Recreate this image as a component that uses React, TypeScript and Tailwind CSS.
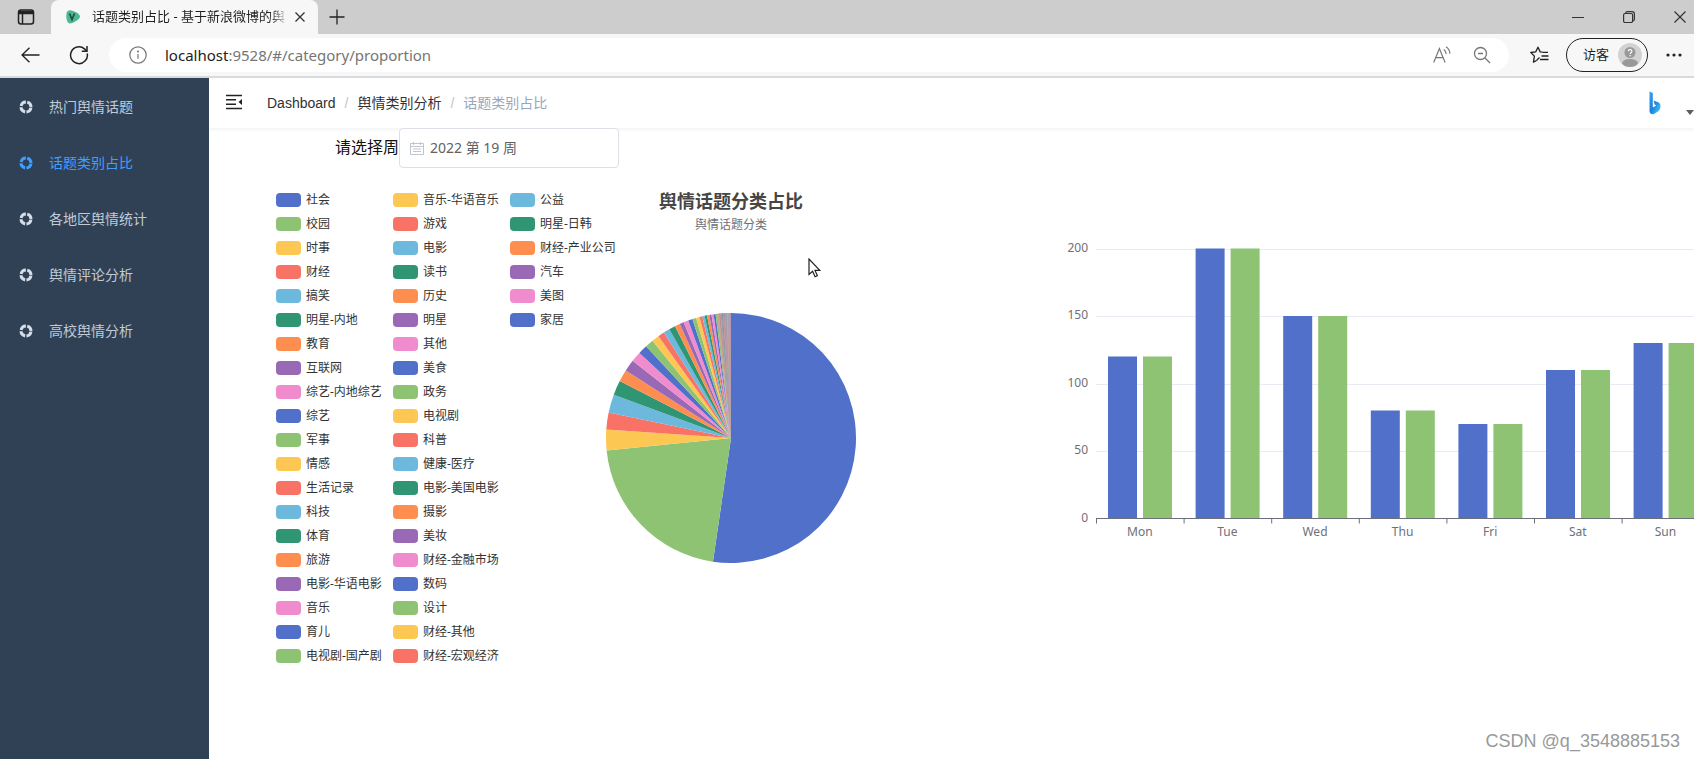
import type { ReactNode } from "react";

const PALETTE = [
  "#5070ca",
  "#8ec374",
  "#fdc753",
  "#f87365",
  "#6db8dd",
  "#309572",
  "#fd8e50",
  "#9a69b6",
  "#f08bce",
];

// share is the slice angle in degrees
const TOPICS = [
  { name: "社会", share: 188.3 },
  { name: "校园", share: 76 },
  { name: "时事", share: 9.6 },
  { name: "财经", share: 7.9 },
  { name: "搞笑", share: 8.5 },
  { name: "明星-内地", share: 6.8 },
  { name: "教育", share: 5.6 },
  { name: "互联网", share: 5.4 },
  { name: "综艺-内地综艺", share: 4.8 },
  { name: "综艺", share: 4.3 },
  { name: "军事", share: 3.9 },
  { name: "情感", share: 3.4 },
  { name: "生活记录", share: 3 },
  { name: "科技", share: 2.9 },
  { name: "体育", share: 3 },
  { name: "旅游", share: 2.4 },
  { name: "电影-华语电影", share: 2 },
  { name: "音乐", share: 2.2 },
  { name: "育儿", share: 2 },
  { name: "电视剧-国产剧", share: 1.8 },
  { name: "音乐-华语音乐", share: 1.6 },
  { name: "游戏", share: 1.3 },
  { name: "电影", share: 1.1 },
  { name: "读书", share: 1.1 },
  { name: "历史", share: 1.1 },
  { name: "明星", share: 1 },
  { name: "其他", share: 1 },
  { name: "美食", share: 0.9 },
  { name: "政务", share: 0.8 },
  { name: "电视剧", share: 0.8 },
  { name: "科普", share: 0.7 },
  { name: "健康-医疗", share: 0.6 },
  { name: "电影-美国电影", share: 0.5 },
  { name: "摄影", share: 0.5 },
  { name: "美妆", share: 0.4 },
  { name: "财经-金融市场", share: 0.4 },
  { name: "数码", share: 0.3 },
  { name: "设计", share: 0.3 },
  { name: "财经-其他", share: 0.3 },
  { name: "财经-宏观经济", share: 0.3 },
  { name: "公益", share: 0.3 },
  { name: "明星-日韩", share: 0.2 },
  { name: "财经-产业公司", share: 0.2 },
  { name: "汽车", share: 0.2 },
  { name: "美图", share: 0.2 },
  { name: "家居", share: 0.1 },
];

const WEEK = [
  { day: "Mon", value: 120 },
  { day: "Tue", value: 200 },
  { day: "Wed", value: 150 },
  { day: "Thu", value: 80 },
  { day: "Fri", value: 70 },
  { day: "Sat", value: 110 },
  { day: "Sun", value: 130 },
];

const MENU = [
  { label: "热门舆情话题", active: false },
  { label: "话题类别占比", active: true },
  { label: "各地区舆情统计", active: false },
  { label: "舆情评论分析", active: false },
  { label: "高校舆情分析", active: false },
];

function IconButton({ label, className, children }: { label: string; className?: string; children: ReactNode }) {
  return (
    <button type="button" aria-label={label} className={`flex shrink-0 items-center justify-center ${className ?? ""}`}>
      {children}
    </button>
  );
}

function TabStrip() {
  return (
    <div className="flex h-[34px] bg-[#cdcdcd]">
      <IconButton label="标签页操作" className="w-[51px]">
        <svg width="18" height="18" viewBox="0 0 18 18" fill="none" stroke="#222" strokeWidth="1.5">
          <rect x="1.5" y="2" width="15" height="14" rx="2.5" />
          <path d="M2 4.500h14" strokeWidth="3.500" />
          <path d="M5.500 5v11" />
        </svg>
      </IconButton>
      <div className="flex w-[267px] items-center rounded-t-lg bg-[#f7f7f7] pl-3.5">
        <svg width="16" height="16" viewBox="0 0 16 16" className="shrink-0">
          <path d="M1.500 4.500C2 1.800 4 .9 6.500 1.600c3 .7 6.600 2.400 8 4.400 1 1.500.4 3.200-1 4.300-2.500 2-6.500 4.600-8.900 4.200C1.800 14 .8 8 1.500 4.500z" fill="#4fb795" />
          <path d="M4.500 4.500 7 10.500l2.500-6" fill="none" stroke="#1d4f45" strokeWidth="1.700" />
        </svg>
        <span className="ml-[11px] w-[197px] whitespace-nowrap text-[13px] text-[#1f1f1f] [mask-image:linear-gradient(to_right,black_90%,transparent)]">
          话题类别占比 - 基于新浪微博的舆
        </span>
        <IconButton label="关闭标签页" className="ml-[5px] w-3">
          <svg width="12" height="12" viewBox="0 0 12 12" stroke="#333" strokeWidth="1.300">
            <path d="M1.500 1.500l9 9M10.500 1.500l-9 9" />
          </svg>
        </IconButton>
      </div>
      <IconButton label="新建标签页" className="w-[38px]">
        <svg width="16" height="16" viewBox="0 0 16 16" stroke="#222" strokeWidth="1.300">
          <path d="M8 .5v15M.5 8h15" />
        </svg>
      </IconButton>
      <div className="-mr-[11px] ml-auto flex">
        <IconButton label="最小化" className="w-[51px]">
          <svg width="12" height="12" viewBox="0 0 12 12" stroke="#333">
            <path d="M0 6.500h12" />
          </svg>
        </IconButton>
        <IconButton label="向下还原" className="w-[51px]">
          <svg width="12" height="12" viewBox="0 0 12 12" fill="none" stroke="#333" strokeWidth="1.200">
            <rect x=".6" y="2.500" width="9" height="9" rx="1.500" />
            <path d="M2.500 2.300C2.700 1.200 3.400.6 4.500.6h4.500c1.500 0 2.400.9 2.400 2.400V8c0 1-.6 1.700-1.600 2" />
          </svg>
        </IconButton>
        <IconButton label="关闭" className="w-[51px]">
          <svg width="12" height="12" viewBox="0 0 12 12" stroke="#333" strokeWidth="1.200">
            <path d="M.5.5l11 11M11.500.5l-11 11" />
          </svg>
        </IconButton>
      </div>
    </div>
  );
}

function AddressBar() {
  return (
    <div className="flex h-11 items-center border-b-2 border-[#d9dadb] bg-[#f7f7f7] pl-5">
      <IconButton label="后退" className="w-5">
        <svg width="19" height="16" viewBox="0 0 19 16" fill="none" stroke="#222" strokeWidth="1.300">
          <path d="M18.500 8H1M8.500.7 1 8l7.500 7.300" />
        </svg>
      </IconButton>
      <IconButton label="刷新" className="ml-[29px] w-5">
        <svg width="20" height="20" viewBox="0 0 20 20" fill="none" stroke="#222" strokeWidth="1.500">
          <path d="M18.200 8.500a8.400 8.400 0 1 1-2.700-4.600l2 2" />
          <path d="M18 1v5.200h-5.200" />
        </svg>
      </IconButton>
      <div className="ml-5 flex h-[34px] min-w-0 flex-1 items-center rounded-full bg-white pl-5 pr-[18px]">
        <svg width="18" height="18" viewBox="0 0 18 18" fill="none" stroke="#777" strokeWidth="1.200" className="shrink-0">
          <circle cx="9" cy="9" r="8.200" />
          <path d="M9 8v4.800" />
          <circle cx="9" cy="5.500" r=".5" fill="#777" />
        </svg>
        <p className="ml-[18px] flex-1 text-[15px] text-[#757575]">
          <span className="text-[#222]">localhost</span>:9528/#/category/proportion
        </p>
        <IconButton label="大声朗读" className="w-[18px]">
          <svg width="18" height="18" viewBox="0 0 18 18" fill="none" stroke="#777" strokeWidth="1.200">
            <path d="M.7 16.500 6.400 2.500l5.700 14M2.700 11.700h7.400" />
            <path d="M10.800 3.500c1.500 1 2.200 2.500 2.300 4.500M13 .8c2.500 1.600 3.800 4 3.900 7" />
          </svg>
        </IconButton>
        <IconButton label="缩小" className="ml-[22px] w-[18px]">
          <svg width="18" height="18" viewBox="0 0 18 18" fill="none" stroke="#777" strokeWidth="1.300">
            <circle cx="7.500" cy="7.500" r="6" />
            <path d="M12 12l5 5M5 7.500h5" />
          </svg>
        </IconButton>
      </div>
      <IconButton label="收藏夹" className="ml-[21px] w-5">
        <svg width="20" height="18" viewBox="0 0 20 18" fill="none" stroke="#222" strokeWidth="1.300" strokeLinejoin="round">
          <path d="M12.500 6.200 10.200 5.900 8 1.200 5.700 5.900.8 6.500l3.600 3.600-1 6 3.200-1.600" />
          <path d="M12.500 6.400h5.500M11.500 10h7M10 13.500h8.500M6.500 14.500l3-3" />
        </svg>
      </IconButton>
      <button type="button" className="ml-4 flex h-[34px] w-[82px] shrink-0 items-center justify-between rounded-full border border-[#222] pl-4 pr-1 text-[13px] text-[#1f1f1f]">
        访客
        <svg width="26" height="26" viewBox="0 0 26 26">
          <clipPath id="avatar">
            <circle cx="13" cy="13" r="12" />
          </clipPath>
          <circle cx="13" cy="13" r="12" fill="#d2d2d2" />
          <g clipPath="url(#avatar)">
            <ellipse cx="13" cy="21.500" rx="8" ry="4.500" fill="#999" />
            <circle cx="13" cy="10.500" r="5.500" fill="#999" />
          </g>
          <path d="M11.200 9.300c0-2.300 3.700-2.300 3.700 0 0 1.400-1.800 1.300-1.800 2.800M13.100 13v1.200" fill="none" stroke="#fff" strokeWidth="1.200" />
        </svg>
      </button>
      <IconButton label="设置及其他" className="ml-[18px] mr-3 w-4">
        <svg width="16" height="4" viewBox="0 0 16 4" fill="#222">
          <circle cx="2" cy="2" r="1.600" />
          <circle cx="8" cy="2" r="1.600" />
          <circle cx="14" cy="2" r="1.600" />
        </svg>
      </IconButton>
    </div>
  );
}

function Sidebar() {
  return (
    <nav className="w-[209px] shrink-0 bg-[#304156] pt-px">
      {MENU.map((item) => (
        <a
          key={item.label}
          href="#"
          className={`flex h-14 items-center gap-4 pl-[19px] text-sm ${item.active ? "text-[#409eff]" : "text-[#bfcbd9]"}`}
        >
          <svg width="14" height="14" viewBox="0 0 14 14" fill="none" stroke={item.active ? "#409eff" : "#d5dde8"} strokeWidth="3">
            <circle cx="7" cy="7" r="5" strokeDasharray="6.450 1.400" strokeDashoffset="-.7" />
          </svg>
          {item.label}
        </a>
      ))}
    </nav>
  );
}

function Navbar() {
  return (
    <header className="flex h-[50px] items-center bg-white pl-4 shadow-[0_1px_4px_rgba(0,21,41,0.08)]">
      <IconButton label="收起侧边栏" className="w-[18px] pb-0.5">
        <svg width="18" height="16" viewBox="0 0 18 16" stroke="#222" strokeWidth="1.600">
          <path d="M1 1.500h16M1 5.800h10M1 10.200h10M1 14.500h16" />
          <path d="M17 5v6l-3.500-3z" fill="#222" stroke="none" />
        </svg>
      </IconButton>
      <ol className="ml-6 flex gap-[9px] text-sm text-[#303133]">
        <li>
          <a href="#">Dashboard</a>
        </li>
        <li className="text-[#c0c4cc]">/</li>
        <li>
          <a href="#">舆情类别分析</a>
        </li>
        <li className="text-[#c0c4cc]">/</li>
        <li className="text-[#97a8be]">话题类别占比</li>
      </ol>
      <button type="button" aria-label="用户菜单" className="ml-auto flex items-end gap-[25px]">
        <svg width="12" height="24" viewBox="0 0 12 24">
          <defs>
            <linearGradient id="bing" x1="0" y1="0" x2="1" y2="1">
              <stop offset="0" stopColor="#2fa4ee" />
              <stop offset=".5" stopColor="#1c7fe0" />
              <stop offset="1" stopColor="#4fd8ee" />
            </linearGradient>
          </defs>
          <path d="M.5.5 3.800 2v14.500l3.400-2-1.600-1L4.600 9.500l5.200 2c1.200.7 1.700 2 1.700 3.800 0 2.500-1 4.200-2.800 5.400L4.900 23C2.500 23.800.5 22.500.5 20z" fill="url(#bing)" />
        </svg>
        <svg width="8" height="5" viewBox="0 0 8 5" fill="#5a5e66">
          <path d="M0 0h8L4 5z" />
        </svg>
      </button>
    </header>
  );
}

function WeekPicker() {
  return (
    <div className="flex h-10 items-center pl-[126px]">
      <label htmlFor="week" className="text-base text-[#111]">
        请选择周
      </label>
      <div className="flex h-10 w-[220px] items-center rounded border border-[#dcdfe6] bg-white pl-2.5">
        <svg width="14" height="14" viewBox="0 0 14 14" fill="none" stroke="#c0c4cc">
          <path d="M.5 2.500h13v11H.5zM.5 5.500h13M3.500 1v3M10.500 1v3M3 8h8M3 10.500h8" />
        </svg>
        <input id="week" readOnly defaultValue="2022 第 19 周" className="ml-1.5 w-40 bg-transparent font-['Noto_Sans','Noto_Sans_CJK_SC',sans-serif] text-sm text-[#606266] outline-none" />
      </div>
    </div>
  );
}

function Legend() {
  return (
    <ul className="grid shrink-0 auto-cols-[109px] grid-flow-col grid-rows-[repeat(20,24px)] gap-x-2 font-['Noto_Sans','Noto_Sans_CJK_SC',sans-serif] text-xs text-[#333]">
      {TOPICS.map((topic, i) => (
        <li key={topic.name} className="flex items-center gap-[5px] whitespace-nowrap">
          <span className="h-3.5 w-[25px] shrink-0 rounded" style={{ backgroundColor: PALETTE[i % PALETTE.length] }} />
          {topic.name}
        </li>
      ))}
    </ul>
  );
}

function PieChart() {
  const radius = 125;
  const point = (deg: number) => {
    const rad = (deg * Math.PI) / 180;
    return `${radius + radius * Math.sin(rad)} ${radius - radius * Math.cos(rad)}`;
  };
  const total = TOPICS.reduce((sum, t) => sum + t.share, 0);
  let angle = 0;

  return (
    <figure className="-ml-[13px] w-[250px] shrink-0 text-center font-['Noto_Sans','Noto_Sans_CJK_SC',sans-serif]">
      <figcaption>
        <h1 className="text-lg leading-[26px] font-bold text-[#464646]">舆情话题分类占比</h1>
        <p className="text-xs leading-[22px] text-[#6e7079]">舆情话题分类</p>
      </figcaption>
      <svg width="250" height="250" viewBox="0 0 250 250" className="mt-[77px]">
        {TOPICS.map((topic, i) => {
          const from = angle;
          angle += (topic.share / total) * 360;
          return (
            <path
              key={topic.name}
              d={`M125 125L${point(from)}A125 125 0 ${angle - from > 180 ? 1 : 0} 1 ${point(angle)}Z`}
              fill={PALETTE[i % PALETTE.length]}
            />
          );
        })}
        {/* the thinnest slices blend into one muted wedge */}
        <path d={`M125 125L${point(353.5)}A125 125 0 0 1 ${point(360)}Z`} fill="#ab97a3" fillOpacity=".65" />
      </svg>
    </figure>
  );
}

function BarChart() {
  const step = 87.6;
  const left = 36;
  const base = 278.5;
  const scale = 1.35;

  return (
    <svg width="660" height="310" viewBox="0 0 660 310" className="mt-[52px] ml-[204px] shrink-0 font-['Noto_Sans',sans-serif] text-xs">
      {[0, 50, 100, 150, 200].map((tick) => (
        <g key={tick}>
          {tick > 0 && <path d={`M${left} ${Math.round(base - tick * scale) + 0.5}H650`} stroke="#e8ebf2" />}
          <text x="28" y={base - tick * scale + 3} textAnchor="end" fill="#6e7079">
            {tick}
          </text>
        </g>
      ))}
      {WEEK.map(({ day, value }, i) => {
        const x = left + i * step;
        return (
          <g key={day}>
            <rect x={x + 12} y={base - value * scale} width="29" height={value * scale} fill="#5070ca" />
            <rect x={x + 47} y={base - value * scale} width="29" height={value * scale} fill="#8ec374" />
            <path d={`M${x + 0.5} ${base}v5`} stroke="#6e7079" />
            <text x={x + step / 2} y={base + 17} textAnchor="middle" fill="#6e7079">
              {day}
            </text>
          </g>
        );
      })}
      <path d={`M${left} ${base}H650`} stroke="#6e7079" />
    </svg>
  );
}

export default function App() {
  return (
    <div className="relative flex min-h-screen flex-col overflow-hidden bg-white font-['Liberation_Sans','Noto_Sans_CJK_SC',sans-serif]">
      <div className="font-['Noto_Sans','Noto_Sans_CJK_SC',sans-serif]">
        <TabStrip />
        <AddressBar />
      </div>
      <div className="flex flex-1">
        <Sidebar />
        <main className="min-w-0 flex-1 overflow-hidden">
          <Navbar />
          <WeekPicker />
          <div className="flex items-start pt-5 pl-[67px]">
            <Legend />
            <PieChart />
            <BarChart />
          </div>
        </main>
      </div>
      <svg width="14" height="20" viewBox="0 0 14 20" className="absolute top-[258px] left-[808px]">
        <path d="M1 1v15.500l3.600-3.300 2.500 5.600 2.300-1-2.400-5.400h4.800z" fill="#fff" stroke="#222" strokeWidth="1.200" />
      </svg>
      <p className="absolute right-3.5 bottom-1 text-lg text-[#999]">CSDN @q_3548885153</p>
    </div>
  );
}
